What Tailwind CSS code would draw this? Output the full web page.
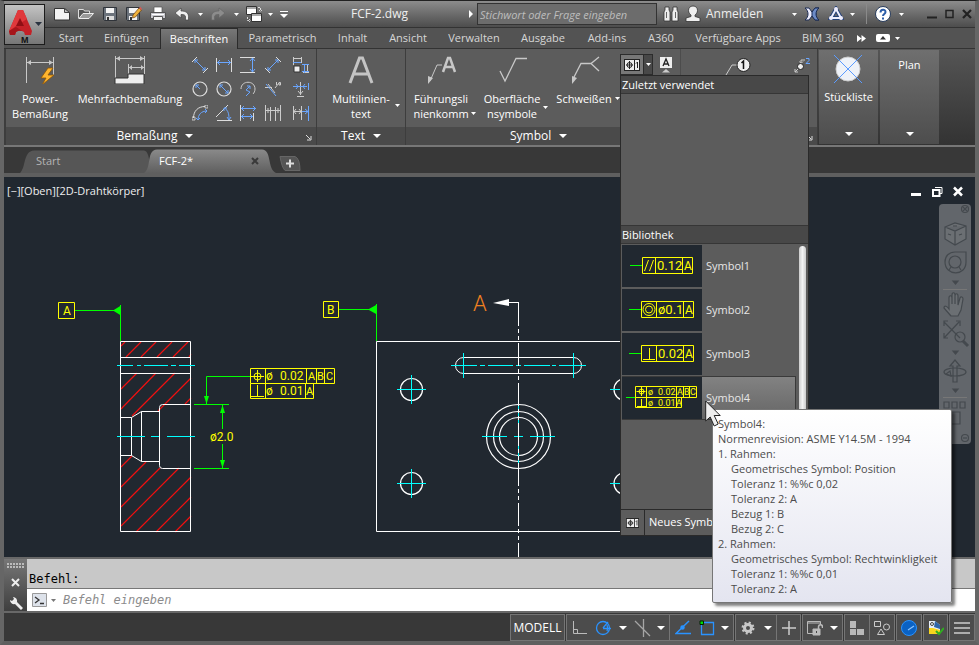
<!DOCTYPE html>
<html lang="de">
<head>
    <meta charset="UTF-8">
    <meta name="viewport" content="width=device-width, initial-scale=1.0">
    <title>FCF-2.dwg</title>
    <script src="https://cdn.jsdelivr.net/npm/@tailwindcss/browser@4"></script>
</head>
<body class="bg-[#5f5f5f] font-['Open_Sans','Noto_Sans',sans-serif] text-[11px] text-[#eeeeee]">
<!-- Shared symbols -->
<svg class="hidden">
    <symbol id="caret" viewBox="0 0 5 3"><path d="M0 0h5L2.500 3z" fill="#fff"/></symbol>
    <symbol id="caret-lg" viewBox="0 0 8 4"><path d="M0 0h8L4 4z" fill="#fff"/></symbol>
    <symbol id="launcher" viewBox="0 0 6 6"><path d="M0 0l4 4M5 1v4H1" fill="none" stroke="#ddd"/></symbol>
    <symbol id="fcf" viewBox="0 0 16 12"><path d="M0 0h16v12H0z" fill="#222"/><path d="M1 1h9v10H1zM11 1h4v10h-4z" fill="#eee"/><circle cx="5.500" cy="6" r="2.500" fill="none" stroke="#222"/><path d="M5.500 2v8M2 6h7M12 4.500l1.500-1.500v6" fill="none" stroke="#222"/></symbol>
</svg>

<div class="relative flex h-screen flex-col overflow-hidden border-x-4 border-t border-b-4 border-x-[#666] border-t-[#222] border-b-[#5f5f5f]">

    <!-- Title bar -->
    <header class="flex h-[27px] shrink-0 items-center border-b border-[#333] bg-linear-to-b from-[#8c8c8c] to-[#4d4d4d] pl-[46px] text-xs">
        <button class="flex w-6 justify-center" aria-label="Neu"><svg class="h-4 w-4" viewBox="0 0 16 16"><path d="M.5 2.500h10l5 4v7.500H.5z" fill="#f2f2f2" stroke="#333"/><path d="M10.500 2.500v4h5z" fill="#bbb" stroke="#444"/></svg></button>
        <button class="flex w-6 justify-center" aria-label="Öffnen"><svg class="h-4 w-4" viewBox="0 0 16 16"><path d="M.5 12.500v-9h5l1 1.500h5v3" fill="#555" stroke="#ddd"/><path d="M1 12.500l4-5h10.500l-4.500 5z" fill="#9a9a9a" stroke="#eee"/></svg></button>
        <button class="flex w-6 justify-center" aria-label="Speichern"><svg class="h-4 w-4" viewBox="0 0 16 16"><path d="M1.500 1.500h13v13h-12l-1-1z" fill="#6c737c" stroke="#30343a"/><path d="M4 2h8v5H4z" fill="#f4f4f4"/><path d="M4 10h8v4H4z" fill="#ddd"/><path d="M5 11h2v3H5z" fill="#333"/></svg></button>
        <button class="flex w-6 justify-center" aria-label="Speichern unter"><svg class="h-4 w-4" viewBox="0 0 16 16"><path d="M.5 1.500h13v13h-12l-1-1z" fill="#6c737c" stroke="#30343a"/><path d="M3 2h9v5H3zM3 10h8v4H3z" fill="#f4f4f4"/><path d="M4 11h2v3H4z" fill="#333"/><path d="M7 9l6-7 2.500 2-6 7-3 1z" fill="#f1b33c" stroke="#6b3d10" stroke-width=".7"/><path d="M13 2l1.200-1.200L16 3l-.8 1z" fill="#d55"/></svg></button>
        <button class="flex w-6 justify-center" aria-label="Drucken"><svg class="h-4 w-4" viewBox="0 0 16 16"><path d="M4 1h8v6H4z" fill="#fff" stroke="#555" stroke-width=".7"/><path d="M.5 6.500h15v6H.5z" fill="#c9c9cf" stroke="#555"/><path d="M3.500 10.500h9v4h-9z" fill="#f2f2f2" stroke="#555"/><path d="M2 8.500h12" stroke="#fff"/></svg></button>
        <button class="flex w-6 justify-center" aria-label="Rückgängig"><svg class="h-4 w-4" viewBox="0 0 16 16"><path d="M1 7l6-5v3c5 0 7.500 2 7.500 5.500V14h-3v-3c0-2-1.500-2.500-4.500-2.500V12z" fill="#f0f0f0" stroke="#444" stroke-width=".7"/></svg></button>
        <button class="flex w-3 justify-center" aria-label="Rückgängig-Liste"><svg class="h-[3px] w-[5px]"><use href="#caret"/></svg></button>
        <button class="flex w-6 justify-center" aria-label="Wiederholen"><svg class="h-4 w-4" viewBox="0 0 16 16"><path d="M15 7L9 2v3C4 5 1.500 7 1.500 10.500V14h3v-3c0-2 1.500-2.500 4.500-2.500V12z" fill="#8c8c8c" stroke="#666" stroke-width=".7"/></svg></button>
        <button class="flex w-3 justify-center" aria-label="Wiederholen-Liste"><svg class="h-[3px] w-[5px]"><use href="#caret"/></svg></button>
        <button class="flex w-6 justify-center" aria-label="Fenster"><svg class="h-[18px] w-[18px]" viewBox="0 0 18 18"><path d="M1.500 1.500h10v8h-10z" fill="#fff" stroke="#333"/><path d="M2 3h9" stroke="#555"/><path d="M6.500 8.500h10v8h-10z" fill="#fff" stroke="#333"/><path d="M7 10h9" stroke="#555"/><path d="M13 2.500h2.500V6M14 5l1.500 1.500L17 5M2.500 12v3.500H5M4 14l1.500 1.500L4 17" fill="none" stroke="#ddd" stroke-dasharray="2 1"/></svg></button>
        <button class="flex w-2 justify-center" aria-label="Fensterliste"><svg class="h-[3px] w-[5px]"><use href="#caret"/></svg></button>
        <button class="ml-1 flex w-3 justify-center" aria-label="Schnellzugriff anpassen"><svg class="h-[7px] w-2" viewBox="0 0 8 7"><path d="M0 0h8v1H0zM0 3h8L4 7z" fill="#fff"/></svg></button>

        <h1 class="flex-1 text-center">FCF-2.dwg</h1>
        <svg class="mr-1 h-2 w-1" viewBox="0 0 4 8"><path d="M0 0l4 4-4 4z" fill="#fff"/></svg>
        <input type="text" aria-label="Suche" placeholder="Stichwort oder Frage eingeben" class="h-[22px] w-[180px] border border-[#333] bg-[#6c6c6c] px-[2px] text-[11px] italic placeholder:text-[#bdbdbd]">
        <button class="ml-1 flex w-5 justify-center" aria-label="Suchen"><svg class="h-4 w-4" viewBox="0 0 16 16"><path d="M2 1h4v3l1 2v9H1V6l1-2zM10 1h4v3l1 2v9H9V6l1-2z" fill="#eee" stroke="#333" stroke-width=".8"/><path d="M7 6h2v4H7z" fill="#555"/><path d="M3.500 6v6M12.500 6v6" stroke="#666"/></svg></button>
        <button class="ml-[3px] flex items-center gap-1"><svg class="h-[18px] w-[18px]" viewBox="0 0 18 18"><path d="M9 1c3 0 4.500 2 4.500 4.500S12 9 11 10v1.500l5 1.500v3.500H2V13l5-1.500V10C6 9 4.500 8 4.500 5.500S6 1 9 1z" fill="#eee" stroke="#333" stroke-width=".8"/></svg><span class="w-[84px] text-left">Anmelden</span></button>
        <button class="flex w-2 justify-center" aria-label="Anmeldemenü"><svg class="h-[3px] w-[5px]"><use href="#caret"/></svg></button>
        <button class="ml-1 flex w-5 justify-center" aria-label="Exchange"><svg class="h-4 w-4" viewBox="0 0 16 16"><path d="M1 2h4l3 4 3-4h4c-4 3-4 9 0 12h-4l-3-4-3 4H1c4-3 4-9 0-12z" fill="#eef" stroke="#1d2d55"/><path d="M15 2h-4L8 6v4l3 4h4c-4-3-4-9 0-12z" fill="#6d8cc8" stroke="#1d2d55"/></svg></button>
        <button class="ml-1 flex w-5 justify-center" aria-label="A360"><svg class="h-4 w-4" viewBox="0 0 16 16"><path d="M8 3l5 9H3z" fill="none" stroke="#25427a" stroke-width="4"/><path d="M8 3l5 9H3z" fill="none" stroke="#eef" stroke-width="2"/><circle cx="8" cy="3" r="2" fill="#eef"/><circle cx="3" cy="12" r="2" fill="#eef"/><circle cx="13" cy="12" r="2" fill="#eef"/></svg></button>
        <button class="flex w-3 justify-center" aria-label="A360-Menü"><svg class="h-[3px] w-[5px]"><use href="#caret"/></svg></button>
        <span class="mx-2 h-5 w-px bg-[#8a8a8a]"></span>
        <button class="flex w-4 justify-center" aria-label="Hilfe"><svg class="h-4 w-4" viewBox="0 0 16 16"><circle cx="8" cy="8" r="7.500" fill="#fff" stroke="#283c5c"/><path d="M5.500 6.500C5.500 3 10.500 3 10.500 6c0 2-2.500 2-2.500 4" fill="none" stroke="#2c5da8" stroke-width="2"/><path d="M7 11.500h2v2H7z" fill="#2c5da8"/></svg></button>
        <button class="ml-1 flex w-3 justify-center" aria-label="Hilfemenü"><svg class="h-[3px] w-[5px]"><use href="#caret"/></svg></button>
        <div class="mr-[3px] ml-5 flex items-center gap-2">
            <button aria-label="Minimieren"><svg class="h-[10px] w-[10px]" viewBox="0 0 10 10"><path d="M0 8.500h10" stroke="#222" stroke-width="2"/></svg></button>
            <button aria-label="Maximieren"><svg class="h-[10px] w-[9px]" viewBox="0 0 9 10"><path d="M1 1.500h7v7H1z" fill="none" stroke="#222" stroke-width="1.500"/></svg></button>
            <button aria-label="Schließen"><svg class="h-[10px] w-[10px]" viewBox="0 0 10 10"><path d="M1 1l8 8M9 1l-8 8" stroke="#222" stroke-width="2.200"/></svg></button>
        </div>
    </header>

    <!-- Application button -->
    <button class="absolute top-[3px] left-0 z-10 flex h-[41px] w-[41px] items-center border border-[#1c1c1c] bg-linear-to-b from-[#c4c4c4] to-[#767676]" aria-label="Anwendungsmenü">
        <svg class="h-[39px] w-[39px]" viewBox="0 0 39 39"><path d="M13 5h5l9 21-1 4h-6l-1-3c-3-2-6-1-8 0l-1 3H5l-1-4z" fill="#c42127"/><path d="M13 5h5l4 9-11 7-7 5z" fill="#e0393c"/><path d="M15 13l4 8h-8z" fill="#8f0f14"/><path d="M4 26l7-4 8 5c-3-2-6-1-8 0l-1 3H5z" fill="#a5161b"/><path d="M30 17h7l-3.500 4z" fill="#2a3340"/><text x="16" y="38" font-size="9" font-weight="700" fill="#111" font-family="Liberation Sans, sans-serif">M</text></svg>
    </button>

    <!-- Ribbon tabs -->
    <nav class="flex h-[21px] shrink-0 items-stretch border-b border-[#333] bg-[#535353] pl-[45px] whitespace-nowrap text-[#d6d6d6] *:flex *:items-center *:justify-center">
        <button class="w-11">Start</button>
        <button class="w-[67px]">Einfügen</button>
        <button class="-mb-px w-[78px] border border-b-0 border-[#2b2b2b] bg-linear-to-b from-[#777] to-[#5c5c5c] text-white">Beschriften</button>
        <button class="w-[89px]">Parametrisch</button>
        <button class="w-[51px]">Inhalt</button>
        <button class="w-[60px]">Ansicht</button>
        <button class="w-[72px]">Verwalten</button>
        <button class="w-[66px]">Ausgabe</button>
        <button class="w-[62px]">Add-ins</button>
        <button class="w-[46px]">A360</button>
        <button class="w-[108px]">Verfügbare Apps</button>
        <button class="w-[62px]">BIM 360</button>
        <button class="w-[15px]" aria-label="Weitere"><svg class="h-[7px] w-[9px]" viewBox="0 0 9 7"><path d="M0 0l4.500 3.500L0 7zM4.500 0L9 3.500 4.500 7z" fill="#fff"/></svg></button>
        <button class="ml-1 w-[20px]" aria-label="Multifunktionsleiste minimieren"><svg class="h-2 w-[14px]" viewBox="0 0 14 8"><rect width="14" height="8" rx="2" fill="#fff"/><path d="M4 5.500h6L7 2z" fill="#333"/></svg></button>
        <button class="w-2" aria-label="Anzeigeoptionen"><svg class="h-[3px] w-[5px]"><use href="#caret"/></svg></button>
    </nav>

    <!-- Ribbon -->
    <section class="flex h-[98px] shrink-0 gap-px border-b-2 border-b-[#777] bg-[#3d3d3d] pl-[2px] text-white">
        <!-- Dimension panel -->
        <div class="flex w-[310px] flex-col bg-[#5c5c5c]">
            <div class="flex flex-1 items-start">
                <button class="flex w-[68px] flex-col items-center pt-[7px] leading-[15px]">
                    <svg class="mb-[7px] h-7 w-8" viewBox="0 0 32 28"><g fill="none" stroke="#c8c8c8"><path d="M2.500 1v26M29.500 1v18M3 6.500h26"/></g><path d="M3 6.500l4-2.500v5zM29 6.500L25 4v5z" fill="#c8c8c8"/><path d="M24 12l-7 10h5l-4 7 12-10h-6l5-7z" fill="#ffb52e" stroke="#8e5505" stroke-width=".8"/></svg>
                    <span>Power-<br>Bemaßung</span>
                </button>
                <button class="flex w-[112px] flex-col items-center pt-[7px] leading-[15px]">
                    <svg class="mb-[7px] h-7 w-8" viewBox="0 0 32 28"><g fill="none" stroke="#c8c8c8"><path d="M1.500 0v22M30.500 0v18M1 2.500h29M14.500 8v11M15 11.500h15"/></g><path d="M2 2.500L6 0v5zM30 2.500L26 0v5zM15 11.500l3-2.500v5zM30 11.500L27 9v5z" fill="#c8c8c8"/><path d="M1 22h13v-4h16v10H1z" fill="#eee" stroke="#333"/></svg>
                    <span>Mehrfachbemaßung</span>
                </button>
                <div class="ml-[2px] grid grid-cols-[24px_24px_24px_26px_30px] auto-rows-[24px] pt-1 *:flex *:items-center *:justify-center">
                    <button aria-label="Ausgerichtet"><svg class="h-4 w-4" viewBox="0 0 16 16" fill="none" stroke="#ddd"><path d="M0 5l5-5M11 16l5-5"/><path d="M3 3l10 10M3 6V3h3M13 10v3h-3" stroke="#6aa6ff"/></svg></button>
                    <button aria-label="Linear"><svg class="h-4 w-4" viewBox="0 0 16 16" fill="none" stroke="#ddd"><path d="M.5 1v14M15.500 1v14"/><path d="M1 5.500h14M4 3L1.500 5.500 4 8M12 3l2.500 2.500L12 8" stroke="#6aa6ff"/></svg></button>
                    <button aria-label="Vertikal"><svg class="h-4 w-4" viewBox="0 0 16 16" fill="none" stroke="#ddd"><path d="M0 .5h15M0 15.500h15"/><path d="M12.500 1v14M10 4l2.500-3L15 4M10 12l2.500 3 2.500-3" stroke="#6aa6ff"/></svg></button>
                    <button aria-label="Gedreht"><svg class="h-4 w-4" viewBox="0 0 16 16" fill="none" stroke="#ddd"><path d="M11 0l5 5M0 11l5 5"/><path d="M3 13L13 3M10 3h3v3M3 10v3h3" stroke="#6aa6ff"/></svg></button>
                    <button aria-label="Koordinaten"><svg class="h-4 w-4" viewBox="0 0 16 16" fill="none"><path d="M0 1.500h8M.5 0v8M8.500 0v6M10 15.500h6M14.500 8v8" stroke="#ccc"/><path d="M0 5.500h8M9 7.500h7M11.500 8v8M9 14.500h7" stroke="#6aa6ff"/><path d="M1 9h6v6H1z" fill="#eee" stroke="#333"/></svg></button>

                    <button aria-label="Radius"><svg class="h-4 w-4" viewBox="0 0 16 16" fill="none"><circle cx="8" cy="8" r="7" stroke="#ddd" stroke-width="1.200"/><path d="M8 8L4 4M4 7V4h3" stroke="#6aa6ff"/></svg></button>
                    <button aria-label="Durchmesser"><svg class="h-4 w-4" viewBox="0 0 16 16" fill="none"><circle cx="8" cy="8" r="7" stroke="#ddd" stroke-width="1.200"/><path d="M4 4l8 8M4 7V4h3M12 9v3H9" stroke="#6aa6ff"/></svg></button>
                    <button aria-label="Verkürzt"><svg class="h-4 w-4" viewBox="0 0 16 16" fill="none"><path d="M1 8c0-9 14-9 14 0 0 2-1 4-2 5" stroke="#ccc"/><path d="M6 15l4-4-4-2 4-4M7 5h3v3" stroke="#6aa6ff"/></svg></button>
                    <button aria-label="Koordinatenbemaßung"><svg class="h-4 w-4" viewBox="0 0 16 16" fill="none"><path d="M0 6.500h7M3 3l7 9M10 7l4-5" stroke="#ccc"/><path d="M1 3l10 12" stroke="#6aa6ff"/><path d="M11.500 1v3M14 1.500h1.500V4H14z" stroke="#ccc"/></svg></button>
                    <button aria-label="Bruch"><svg class="h-4 w-4" viewBox="0 0 16 16" fill="none"><path d="M7.500 1v13M4 15.500h7M5 10l2.500 3L10 10" stroke="#ccc"/><path d="M0 5.500h14M3 3l2 2.500L3 8M12 3l-2 2.500L12 8M15.500 2v7" stroke="#6aa6ff"/></svg></button>

                    <button aria-label="Bogenlänge"><svg class="h-4 w-4" viewBox="0 0 16 16" fill="none"><path d="M1.500 13C1.500 6 6 1.500 13 1.500" stroke="#ddd"/><path d="M0 12h3v3H0zM13 0h3v3h-3z" stroke="#ddd" stroke-width=".8"/><path d="M6 15c0-5 3-9 9-9M4 13l2 2 2-2M13 4l2 2-2 2" stroke="#6aa6ff"/></svg></button>
                    <button aria-label="Winkel"><svg class="h-4 w-4" viewBox="0 0 16 16" fill="none"><path d="M12 0L0 12M1 15.500h15" stroke="#ddd"/><path d="M8 3c5 2 5 8 5 12M8 6V3h3M11 12l2 3 2-3" stroke="#6aa6ff"/></svg></button>
                    <button aria-label="Basislinie"><svg class="h-4 w-4" viewBox="0 0 16 16" fill="none"><path d="M.5 0v16M13.500 8v8" stroke="#ddd"/><path d="M1 3.500h15M1 11.500h12M4 1L1.500 3.500 4 6M13 1l2.500 2.500L13 6M4 9l-2.500 2.500L4 14M10 9l2.500 2.500L10 14" stroke="#6aa6ff"/></svg></button>
                    <button aria-label="Weiterführen"><svg class="h-4 w-4" viewBox="0 0 16 16" fill="none"><path d="M.5 0v16M5.500 2v14M10.500 2v14M15.500 0v16M0 5.500h16M3 3v5M13 3v5" stroke="#ccc"/></svg></button>
                    <button aria-label="Platz anpassen"><svg class="h-4 w-4" viewBox="0 0 16 16" fill="none"><path d="M.5 1v14M8.500 1v14M0 6.500h8M3 4L1 6.500 3 9M6 4l2 2.500L6 9" stroke="#ccc"/><path d="M9 6.500h6M15.500 1v15M12 4l3 2.500L12 9" stroke="#6aa6ff"/></svg></button>
                </div>
            </div>
            <div class="relative flex h-[18px] items-center justify-center gap-2 bg-[#4a4a4a] pr-3 text-xs">Bemaßung <svg class="h-1 w-2"><use href="#caret-lg"/></svg><svg class="absolute right-1 bottom-1 h-[6px] w-[6px]"><use href="#launcher"/></svg></div>
        </div>
        <!-- Text panel -->
        <div class="flex w-[88px] flex-col bg-[#5c5c5c]">
            <button class="relative flex flex-1 flex-col items-center pt-[7px] leading-[15px]">
                <svg class="mb-[7px] h-7 w-7" viewBox="0 0 28 28"><path d="M3 27L12.500 2h3L25 27M7 18h14" fill="none" stroke="#c4c4c4" stroke-width="3"/></svg>
                <span>Multilinien-<br>text</span>
                <svg class="absolute right-[5px] bottom-5 h-[3px] w-[5px]"><use href="#caret"/></svg>
            </button>
            <div class="flex h-[18px] items-center justify-center gap-2 bg-[#4a4a4a] text-xs">Text <svg class="h-1 w-2"><use href="#caret-lg"/></svg></div>
        </div>
        <!-- Symbol panel -->
        <div class="flex w-[411px] flex-col bg-[#5c5c5c]">
            <div class="flex flex-1 items-start">
                <button class="relative flex w-[70px] flex-col items-center pt-[7px] leading-[15px]">
                    <svg class="mb-[7px] h-7 w-8" viewBox="0 0 32 28"><path d="M5 25l7-16h5" fill="none" stroke="#c8c8c8"/><path d="M3 20l5 2-5 6z" fill="#c8c8c8"/><path d="M18 16l5-14h2l5 14M20 11h8" fill="none" stroke="#c8c8c8" stroke-width="2.500"/></svg>
                    <span>Führungsli<br>nienkomm</span>
                    <svg class="absolute right-0 bottom-[6px] h-[3px] w-[5px]"><use href="#caret"/></svg>
                </button>
                <button class="relative flex w-[72px] flex-col items-center pt-[7px] leading-[15px]">
                    <svg class="mb-[7px] h-7 w-8" viewBox="0 0 32 28"><path d="M4 15l5 10L20 2.500h11" fill="none" stroke="#c8c8c8" stroke-width="1.300"/></svg>
                    <span>Oberfläche<br>nsymbole</span>
                    <svg class="absolute right-0 bottom-3 h-[3px] w-[5px]"><use href="#caret"/></svg>
                </button>
                <button class="relative flex w-[72px] flex-col items-center pt-[7px] leading-[15px]">
                    <svg class="mb-[7px] h-7 w-8" viewBox="0 0 32 28"><path d="M5 23L13 7.500h10L31 1M23 7.500L31 15" fill="none" stroke="#c8c8c8" stroke-width="1.300"/><path d="M4 20l5 2-5 6z" fill="#c8c8c8"/></svg>
                    <span>Schweißen</span>
                    <svg class="absolute right-0 bottom-[6px] h-[3px] w-[5px]"><use href="#caret"/></svg>
                </button>
                <div class="relative flex pt-[5px]">
                    <button class="flex h-[21px] w-6 items-center justify-center border border-[#2c2c2c] bg-[#777]" aria-label="Form- und Lagetoleranz"><svg class="h-3 w-4"><use href="#fcf"/></svg></button>
                    <button class="flex h-[21px] w-[9px] items-center justify-center border border-l-0 border-[#2c2c2c] bg-[#484848]" aria-label="Symbolliste"><svg class="h-[3px] w-[5px]"><use href="#caret"/></svg></button>

                    <!-- Symbol drop-down -->
                    <div class="absolute top-[26px] left-0 z-20 flex h-[461px] w-[189px] flex-col border border-[#2a2a2a] bg-[#5c5c5c]">
                        <h2 class="h-[18px] border-b border-[#363636] bg-[#484848] px-px leading-[18px]">Zuletzt verwendet</h2>
                        <div class="h-[131px]"></div>
                        <h2 class="h-[19px] border-y border-[#363636] bg-[#484848] px-px leading-[18px]">Bibliothek</h2>
                        <div class="flex flex-1 pl-px">
                            <div class="flex w-[174px] flex-col text-[#e6e6e6]">
                                <button class="flex h-11 items-center text-left"><svg class="mr-1 h-[42px] w-20 bg-[#212830]" viewBox="0 0 80 42" fill="none" stroke="#ff0"><path d="M8 20.500h12" stroke="#0f0"/><path d="M20.500 12.500h50v16h-50zM33.500 12.500v16M60.500 12.500v16M22.500 26l4-11M27.500 26l4-11"/><g fill="#ff0" stroke="none" font-size="13" font-family="Roboto, sans-serif"><text x="35" y="25">0.12</text><text x="62" y="25" font-size="12">A</text></g></svg>Symbol1</button>
                                <button class="flex h-11 items-center text-left"><svg class="mr-1 h-[42px] w-20 bg-[#212830]" viewBox="0 0 80 42" fill="none" stroke="#ff0"><path d="M7 20.500h12" stroke="#0f0"/><path d="M19.500 12.500h52v16h-52zM34.500 12.500v16M61.500 12.500v16"/><circle cx="27" cy="20.500" r="3.500"/><circle cx="27" cy="20.500" r="6"/><g fill="#ff0" stroke="none" font-size="13" font-family="Roboto, sans-serif"><text x="36" y="25">ø0.1</text><text x="63" y="25" font-size="12">A</text></g></svg>Symbol2</button>
                                <button class="flex h-11 items-center text-left"><svg class="mr-1 h-[42px] w-20 bg-[#212830]" viewBox="0 0 80 42" fill="none" stroke="#ff0"><path d="M7 20.500h12" stroke="#0f0"/><path d="M19.500 12.500h52v16h-52zM34.500 12.500v16M61.500 12.500v16M27.500 15v11M21 26.500h12"/><g fill="#ff0" stroke="none" font-size="13" font-family="Roboto, sans-serif"><text x="36" y="25">0.02</text><text x="63" y="25" font-size="12">A</text></g></svg>Symbol3</button>
                                <button class="flex h-11 items-center border-y border-r border-[#3a3a3a] bg-linear-to-b from-[#828282] to-[#666] text-left"><svg class="mr-1 h-[42px] w-20 bg-[#212830]" viewBox="0 0 80 42" fill="none" stroke="#ff0"><path d="M4 20.500h9" stroke="#0f0"/><path d="M13.500 9.500h61v11h-61zM13.500 20.500v10h46v-10M24.500 9.500v21M54.500 9.500v21M61.500 9.500v11M67.500 9.500v11M19.500 10v9M14.500 14.500h9M19.500 22v7M15 29.500h9"/><circle cx="19.500" cy="14.500" r="2.500"/><g fill="#ff0" stroke="none" font-size="9" font-family="Roboto, sans-serif"><text x="26" y="18">ø</text><text x="36" y="18">0.02</text><text x="55" y="18">A</text><text x="62" y="18">B</text><text x="68" y="18">C</text><text x="26" y="29">ø</text><text x="36" y="29">0.01</text><text x="54" y="29">A</text></g></svg>Symbol4</button>
                            </div>
                            <div class="mt-[2px] ml-[3px] w-[7px] rounded-full bg-linear-to-r from-[#ccc] via-[#f2f2f2] to-[#ccc]"></div>
                        </div>
                        <button class="flex h-[26px] items-center border-t border-[#2a2a2a] text-left"><span class="mr-1 flex h-full w-6 items-center justify-center border-r border-[#2a2a2a]"><svg class="h-[10px] w-[13px]"><use href="#fcf"/></svg></span>Neues Symbol</button>
                    </div>

                    <!-- Tooltip of the highlighted symbol -->
                    <div role="tooltip" class="absolute top-[360px] left-[92px] z-30 w-60 rounded-xs border border-[#767676] bg-linear-to-b from-white to-[#e4e5f0] pt-[6px] pb-[6px] pl-[5px] leading-[15px] whitespace-nowrap text-[#4c4c4c] shadow-[3px_3px_3px_rgba(0,0,0,0.5)]">
                        <p>Symbol4:</p>
                        <p>Normenrevision: ASME Y14.5M - 1994</p>
                        <p>1. Rahmen:</p>
                        <div class="pl-[13px]">
                            <p>Geometrisches Symbol: Position</p>
                            <p>Toleranz 1: %%c 0,02</p>
                            <p>Toleranz 2: A</p>
                            <p>Bezug 1: B</p>
                            <p>Bezug 2: C</p>
                        </div>
                        <p>2. Rahmen:</p>
                        <div class="pl-[13px]">
                            <p>Geometrisches Symbol: Rechtwinkligkeit</p>
                            <p>Toleranz 1: %%c 0,01</p>
                            <p>Toleranz 2: A</p>
                        </div>
                    </div>
                    <svg class="absolute top-[351px] left-[85px] z-40 h-7 w-4" viewBox="0 0 16 28"><path d="M.7 1v20l4.500-4 4 9 4-2-4-8.500h6z" fill="#eee" stroke="#222"/></svg>
                </div>
                <button class="mt-2 ml-[6px]" aria-label="Bezug"><svg class="h-4 w-[14px]" viewBox="0 0 14 16"><path d="M1 0h12v11H1z" fill="#eee"/><path d="M4 9l3-7 3 7M5 7h4" fill="none" stroke="#222" stroke-width="1.300"/><path d="M7 12l4 3.500H3z" fill="#ccc"/></svg></button>
                <span class="ml-[7px] h-[78px] w-px bg-[#4c4c4c]"></span>
                <button class="mt-2 ml-[44px]" aria-label="Positionsnummer"><svg class="h-6 w-7" viewBox="0 0 28 24"><path d="M1 18l6-10h6" fill="none" stroke="#ccc"/><circle cx="18.500" cy="8" r="6.500" fill="#eee" stroke="#222"/><path d="M16.500 6l2-2v8" fill="none" stroke="#111" stroke-width="1.500"/></svg></button>
                <button class="mt-2 ml-[41px]" aria-label="Positionsnummer ändern"><svg class="h-4 w-4" viewBox="0 0 16 16" fill="none"><path d="M1 15l3-3M1 12v3h3M7 6V3h4M5.500 4.500L7 6.500l2-2" stroke="#ccc"/><circle cx="6.500" cy="9.500" r="3" fill="#eee" stroke="#222"/><path d="M12 1.500h3v2l-3 3h4" stroke="#6aa6ff"/></svg></button>
            </div>
            <div class="relative flex h-[18px] items-center bg-[#4a4a4a] pl-[104px] text-xs">Symbol <svg class="ml-2 h-1 w-2"><use href="#caret-lg"/></svg><svg class="absolute right-1 bottom-1 h-[6px] w-[6px]"><use href="#launcher"/></svg></div>
        </div>
        <!-- Collapsed panels -->
        <div class="flex flex-1 gap-[2px] bg-linear-to-b from-[#555] to-[#333] py-px pl-px">
            <button class="flex w-[59px] flex-col items-center justify-between bg-linear-to-b from-[#6f6f6f] to-[#4d4d4d] pt-1 pb-1">
                <span class="flex flex-col items-center gap-[5px]"><svg class="h-[30px] w-[30px]" viewBox="0 0 30 30"><circle cx="15" cy="15" r="12" fill="#eef2f8" stroke="#ccc"/><path d="M1 1l28 28M29 1L1 29" stroke="#5a9bff"/></svg>Stückliste</span>
                <svg class="mb-1 h-1 w-2"><use href="#caret-lg"/></svg>
            </button>
            <button class="flex w-[59px] flex-col items-center justify-between bg-linear-to-b from-[#6f6f6f] to-[#4d4d4d] pt-[7px] pb-1">Plan<svg class="mb-1 h-1 w-2"><use href="#caret-lg"/></svg></button>
        </div>
    </section>

    <!-- File tabs -->
    <div class="flex h-[30px] shrink-0 items-end border-b-4 border-[#5f5f5f] bg-[#383838] pl-4">
        <button class="relative h-[23px] w-[130px] pl-4 text-left text-[#b4b4b4]"><svg class="absolute inset-0 h-full w-full" viewBox="0 0 130 23" preserveAspectRatio="none"><path d="M0 23C6 18 3 1 14 .5H124Q130 1 130 23z" fill="#565656"/></svg><span class="relative">Start</span></button>
        <button class="relative h-[24px] w-[126px] pl-[9px] text-left text-white"><svg class="absolute inset-0 h-full w-full overflow-visible" viewBox="0 0 126 24" preserveAspectRatio="none"><defs><linearGradient id="tab" x2="0" y2="1"><stop stop-color="#8a8a8a"/><stop offset="1" stop-color="#5f5f5f"/></linearGradient></defs><path d="M-6 24C2 19-4 1 7 .5h105C122 1 117 20 126 24z" fill="url(#tab)"/></svg><span class="relative">FCF-2*</span><svg class="absolute top-2 right-[17px] h-2 w-2" viewBox="0 0 8 8"><path d="M1 1l6 6M7 1L1 7" stroke="#3a3a3a" stroke-width="2"/></svg></button>
        <button class="mb-[2px] ml-[3px]" aria-label="Neue Zeichnung"><svg class="h-[15px] w-[22px]" viewBox="0 0 22 15"><path d="M1 .5h15q5 2 5 14H6Q3 12 1 .5z" fill="#555" stroke="#666"/><path d="M7 7.500h8M11 3.500v8" stroke="#ddd" stroke-width="2"/></svg></button>
    </div>

    <!-- Drawing area -->
    <main class="relative min-h-0 flex-1 overflow-hidden bg-[#212830]">
        <svg class="absolute inset-0 h-full w-full" role="img" aria-label="Zeichnung">
            <g transform="translate(-4 -177)" fill="none" stroke-width="1">
                <!-- hatch -->
                <path stroke="#f01010" stroke-width="1.200" d="M121 346l4-4M126 357l15-15M141 357l15-15M157 357l15-15M173 357l15-15M189 357l2-3M121 389l16-16M121 409l35-36M132 416l43-43M158 411l33-33M185 404l6-6M121 467l11-11M121 487l25-25M121 507l39-39M121 526l58-58M136 532l55-55M156 532l35-35M175 532l16-16"/>
                <!-- part outlines -->
                <g stroke="#fff">
                    <path d="M120.500 341.500h70v190h-70zM120.500 357.500h70M120.500 373.500h70"/>
                    <path d="M120.500 417.500h11v38h-11M131.500 417.500l10-6h18M131.500 455.500l10 6h18M141.500 411.500v50M190.500 404.500h-28q-3 0-3 3v58q0 3 3 3h28"/>
                    <path d="M376.500 341.500h290v190h-290z"/>
                    <rect x="455.500" y="357.500" width="126" height="16" rx="8"/>
                    <g stroke-width="1.200"><circle cx="411.500" cy="389.500" r="11"/><circle cx="411.500" cy="483.500" r="11"/><circle cx="625" cy="389.500" r="11"/><circle cx="625" cy="483.500" r="11"/>
                    <circle cx="518.500" cy="436.500" r="32"/><circle cx="518.500" cy="436.500" r="25"/><circle cx="518.500" cy="436.500" r="19"/></g>
                </g>
                <!-- centre lines -->
                <path stroke="#0ff" d="M117 365.500h16M137 365.500h4M144 365.500h24M171 365.500h5M179 365.500h16M117 436.500h28M151 436.500h8M167 436.500h28M451 365.500h26M480 365.500h5M488 365.500h25M516 365.500h5M524 365.500h26M552 365.500h4M559 365.500h27M463.500 353v25M573.500 353v25M397 389.500h29M411.500 375v29M397 483.500h29M411.500 469v29M610 389.500h29M610 483.500h29M482 436.500h25M514 436.500h9M530 436.500h25M518.500 404v65"/>
                <path stroke="#fff" stroke-dasharray="23 3 4 3 4 3" d="M518.500 303v254"/>
                <path stroke="#fff" d="M509 302.500h10"/>
                <path fill="#fff" d="M493 303l16-4v7z"/>
                <!-- dimensions -->
                <path stroke="#0f0" d="M75 310.500h45M120.500 305v36M339 309.500h37M376.500 304v37M250 376.500h-43.500v28M194 404.500h35M194 468.500h35M222.500 404v25M222.500 444v24"/>
                <path fill="#0f0" d="M113 310.500l8-5v10zM368 309.500l9-5v10zM204 396h5l-2.500 8zM220 413h5l-2.500-8zM220 460h5l-2.500 8z"/>
                <path stroke="#ff0" d="M58.500 302.500h16v16h-16zM323.500 301.500h15v16h-15zM250.500 368.500h84v15h-84zM250.500 383.500v15h63v-15M265.500 368.500v30M306.500 368.500v15M316.500 368.500v15M324.500 368.500v15M305.500 383.500v15M257.500 370v12M251 376.500h13M257.500 385v11M251 396.500h13"/>
                <circle cx="257.500" cy="376.500" r="3.500" stroke="#ff0"/>
                <g fill="#ff0" font-size="12" font-family="Roboto, sans-serif">
                    <text x="63" y="315">A</text><text x="327" y="314">B</text>
                    <text x="210" y="441">ø2.0</text>
                    <text x="266" y="380">ø</text><text x="280" y="380">0.02</text><text x="308" y="380" font-size="11">A</text><text x="317" y="380" font-size="11">B</text><text x="326" y="380" font-size="11">C</text>
                    <text x="266" y="395">ø</text><text x="280" y="395">0.01</text><text x="306" y="395" font-size="11">A</text>
                </g>
                <text x="473" y="311" fill="#f08020" font-size="22" font-weight="300" font-family="Roboto, sans-serif">A</text>
            </g>
        </svg>
        <p class="relative pt-[6px] pl-[3px] text-[11px] leading-4 font-medium">[−][Oben][2D-Drahtkörper]</p>

        <div class="absolute top-[9px] right-3 flex items-center gap-[10px]">
            <button aria-label="Zeichnung minimieren"><svg class="h-[11px] w-[11px]" viewBox="0 0 11 11"><path d="M0 8.500h10" stroke="#fff" stroke-width="3"/></svg></button>
            <button aria-label="Zeichnung verkleinern"><svg class="h-[11px] w-[11px]" viewBox="0 0 11 11" fill="none" stroke="#fff"><path d="M3 1.500h7v6H8" /><path d="M1 4h6.500v6H1z" stroke-width="2"/></svg></button>
            <button aria-label="Zeichnung schließen"><svg class="h-[11px] w-[10px]" viewBox="0 0 10 11"><path d="M1 1.500l8 8M9 1.500l-8 8" stroke="#fff" stroke-width="2.500"/></svg></button>
        </div>

        <!-- Navigation bar -->
        <div class="absolute top-[27px] right-1 flex h-60 w-8 flex-col items-center rounded-sm bg-[#62666b]">
            <svg class="h-60 w-8" viewBox="0 0 32 240" fill="none" stroke="#44494e" stroke-width="1.200">
                <circle cx="26" cy="5" r="3.500"/><path d="M24 3l4 4M28 3l-4 4"/>
                <path d="M6 23l10-4 11 3v13l-11 6-10-6zM6 23l10 4 11-5M16 27v14M9 30l3 1M20 31l3-1M14 22h4" fill="#6b6f73"/>
                <path d="M16 48h11v10c0 15-21 14-21 0 0-6 4-10 10-10z"/><circle cx="16" cy="58" r="6"/><path d="M10 66l2-3M22 66l-2-3"/>
                <path d="M14 77h5l-2.500 3zM14 147h5l-2.500 3zM14 185h5l-2.500 3z" fill="#44494e"/>
                <path d="M4 85.500h24M4 193.500h24" stroke="#777"/>
                <path d="M12 112l-7-8c0-3 3-2 5 1V94c0-3 3-3 3 0v6-9c0-3 3-3 3 0v9-8c0-3 3-3 3 0v9l2-7c1-2 3-1 3 1l-2 11-3 6z" fill="#6b6f73"/>
                <path d="M5 118l16 16M20 118L5 134M5 122v-5h4M17 117h4v5M5 129v5h4"/><circle cx="21" cy="133" r="5"/><path d="M24 137l5 5" stroke-width="3"/>
                <path d="M14 178v-16h-3l5-6 5 6h-3v16z"/><ellipse cx="16" cy="168" rx="11" ry="4"/><path d="M12 172l-5-2 4-3z"/>
                <path d="M5 198h5v6H5zM13 198h5v6h-5zM21 198h5v6h-5zM9 208h12v12H9z"/>
                <circle cx="26" cy="234" r="3.500"/><path d="M24 234h4"/>
            </svg>
        </div>
    </main>

    <!-- Command line -->
    <section class="flex h-[56px] shrink-0 border-y-2 border-[#686868] font-['DejaVu_Sans_Mono','Liberation_Mono',monospace] text-xs">
        <div class="flex w-[23px] flex-col items-center justify-between bg-linear-to-b from-[#777] to-[#3f3f3f] pt-1">
            <svg class="h-[5px] w-[17px]" viewBox="0 0 17 5"><path d="M0 1h17M0 4h17" stroke="#bbb" stroke-width="2" stroke-dasharray="2 1"/></svg>
            <button aria-label="Befehlszeile schließen"><svg class="h-[9px] w-[9px]" viewBox="0 0 9 9"><path d="M1 1l7 7M8 1L1 8" stroke="#eee" stroke-width="2"/></svg></button>
            <button aria-label="Anpassen"><svg class="h-[15px] w-[14px]" viewBox="0 0 14 15"><path d="M4 1a4 4 0 0 1 4 5l6 6-2 2-6-6a4 4 0 0 1-5-4l2 1 2-2z" fill="#eee"/></svg></button>
        </div>
        <div class="flex flex-1 flex-col bg-white text-black">
            <p class="flex h-[30px] items-end border-b border-[#777] bg-[#c8c8c8] pb-px pl-[2px]">Befehl:</p>
            <div class="flex flex-1 items-center pl-[5px]">
                <button aria-label="Letzte Befehle" class="flex items-center gap-1"><svg class="h-[14px] w-[15px]" viewBox="0 0 15 14"><path d="M.5.5h14v13H.5z" fill="#dde2ea" stroke="#999"/><path d="M3 4l4 3-4 3M8 10.500h4" fill="none" stroke="#333" stroke-width="1.300"/></svg><svg class="h-[3px] w-[5px]" viewBox="0 0 5 3"><path d="M0 0h5L2.500 3z" fill="#777"/></svg></button>
                <input type="text" aria-label="Befehl" placeholder="Befehl eingeben" class="ml-[7px] h-5 flex-1 italic placeholder:text-[#8c8c8c]">
            </div>
        </div>
    </section>

    <!-- Status bar -->
    <footer class="flex h-[28px] shrink-0 items-stretch justify-end gap-px bg-[#383838] pt-px">
        <button class="w-[55px] border border-[#757575] bg-[#4c4c4c] text-xs text-white">MODELL</button>
        <div class="flex w-[168px] items-center border border-[#757575] bg-[#4c4c4c]">
            <button class="flex w-[26px] justify-center" aria-label="Orthomodus"><svg class="h-[14px] w-[14px]" viewBox="0 0 14 14" fill="none" stroke="#bbb"><path d="M.5 0v12.500H14M.5 8.500h4v4"/></svg></button>
            <button class="flex w-5 justify-center" aria-label="Polare Spur"><svg class="h-4 w-4" viewBox="0 0 16 16" fill="none" stroke="#2a93ff" stroke-width="1.300"><circle cx="8" cy="8" r="6.500"/><path d="M8 8.500h8M8 8l5-6M12 5c1 2 1 3 0 6"/></svg></button>
            <button class="flex w-5 justify-center" aria-label="Polarwinkel"><svg class="h-1 w-2"><use href="#caret-lg"/></svg></button>
            <button class="flex w-5 justify-center" aria-label="Isometrie"><svg class="h-[18px] w-[18px]" viewBox="0 0 18 18" fill="none" stroke="#a5a5a5" stroke-width="1.300"><path d="M1 2l15 15M9.500 0v18"/></svg></button>
            <button class="flex w-[17px] justify-center" aria-label="Isometrieebene"><svg class="h-1 w-2"><use href="#caret-lg"/></svg></button>
            <button class="flex h-full w-[26px] items-center justify-center border-l border-[#757575]" aria-label="Objektfangspur"><svg class="h-4 w-4" viewBox="0 0 16 16" fill="none" stroke="#2a93ff" stroke-width="1.500"><path d="M14 1L1 13.500h15"/><circle cx="7.500" cy="7.500" r="1.500" fill="#2a93ff"/></svg></button>
            <button class="ml-[2px] flex w-5 justify-center" aria-label="Objektfang"><svg class="h-4 w-4" viewBox="0 0 16 16"><path d="M2.500 2.500h12v12h-12z" fill="none" stroke="#2a93ff" stroke-width="1.300"/><path d="M1 1h3.500v3.500H1z" fill="#0d0" stroke="#020"/></svg></button>
            <button class="flex w-4 justify-center" aria-label="Fangmodi"><svg class="h-1 w-2"><use href="#caret-lg"/></svg></button>
        </div>
        <div class="flex w-[66px] items-center border border-[#757575] bg-[#4c4c4c]">
            <button class="flex w-6 justify-center" aria-label="Arbeitsbereich"><svg class="h-[14px] w-[14px]" viewBox="0 0 14 14"><circle cx="7" cy="7" r="5.200" fill="none" stroke="#c8c8c8" stroke-width="2.500" stroke-dasharray="2 2.084"/><circle cx="7" cy="7" r="3.500" fill="none" stroke="#c8c8c8" stroke-width="3"/></svg></button>
            <button class="flex w-4 justify-center" aria-label="Arbeitsbereichsliste"><svg class="h-1 w-2"><use href="#caret-lg"/></svg></button>
            <button class="flex h-full w-6 items-center justify-center border-l border-[#757575]" aria-label="Beschriftungsüberwachung"><svg class="h-[14px] w-[14px]" viewBox="0 0 14 14"><path d="M0 7h14M7 0v14" stroke="#ccc" stroke-width="1.500"/></svg></button>
        </div>
        <div class="flex w-[41px] items-center border border-[#757575] bg-[#4c4c4c]">
            <button class="flex w-6 justify-center" aria-label="Oberfläche sperren"><svg class="h-4 w-4" viewBox="0 0 16 16" fill="none" stroke="#bbb"><path d="M6 13.500H.5V1.500h13v3M1 3h12"/><path d="M6 9h7v6H6z" fill="#bbb"/><path d="M11.500 9V7c0-3 4-3 4 0v1" stroke-width="1.500"/><path d="M9.500 11v2" stroke="#444"/></svg></button>
            <button class="flex w-4 justify-center" aria-label="Sperrliste"><svg class="h-1 w-2"><use href="#caret-lg"/></svg></button>
        </div>
        <div class="flex w-[51px] items-center border border-[#757575] bg-[#4c4c4c]">
            <button class="flex w-6 justify-center" aria-label="Objekte isolieren"><svg class="h-4 w-4" viewBox="0 0 16 16"><path d="M1 1h6v7H1zM1 9h6v6H1zM8 9h7v6H8z" fill="#b8b8b8"/></svg></button>
            <button class="flex h-full w-[25px] items-center justify-center border-l border-[#757575]" aria-label="Auswahlfilter"><svg class="h-4 w-4" viewBox="0 0 16 16" fill="none" stroke="#ccc"><path d="M.5 1.500h6v5h-6zM7 9l3.500 5.500h-7z"/><circle cx="12.500" cy="7" r="3"/></svg></button>
        </div>
        <button class="flex w-[26px] items-center justify-center border border-[#757575] bg-[#4c4c4c]" aria-label="Hardwarebeschleunigung"><svg class="h-[18px] w-[18px]" viewBox="0 0 18 18"><circle cx="9" cy="9" r="7.500" fill="#0a62c4" stroke="#2a93ff"/><path d="M8 11l6-4" stroke="#8cc4ff" stroke-width="1.200"/></svg></button>
        <button class="flex w-[25px] items-center justify-center border border-[#757575] bg-[#4c4c4c]" aria-label="Plotbenachrichtigung"><svg class="h-4 w-4" viewBox="0 0 16 16"><path d="M1 8h11v6H1z" fill="#f7d51d"/><path d="M1 1h6l5 4v5L5 8H1z" fill="#e6eef8"/><path d="M7 1l5 4v4L6 7z" fill="#2d64a8"/><circle cx="4" cy="4" r="1.500" fill="none" stroke="#444"/><path d="M8 11l3 3 5-6" fill="none" stroke="#2fae1f" stroke-width="2"/></svg></button>
        <button class="flex w-[26px] items-center justify-center border border-[#757575] bg-[#4c4c4c]" aria-label="Anpassung"><svg class="h-3 w-4" viewBox="0 0 16 12"><path d="M0 1h16M0 6h16M0 11h16" stroke="#ccc" stroke-width="1.500"/></svg></button>
    </footer>
</div>
</body>
</html>
